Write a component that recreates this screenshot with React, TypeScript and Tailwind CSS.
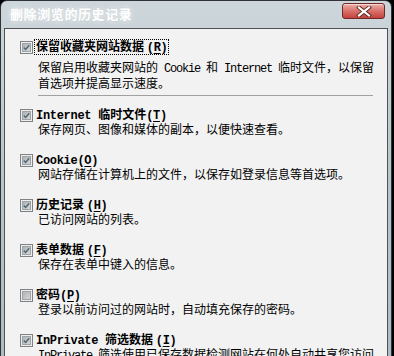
import React from 'react';

const cjk = "font-['Noto_Sans_CJK_SC','Noto_Sans_CJK_JP',sans-serif]";
const mono = "font-['Liberation_Mono','Noto_Sans_CJK_SC',monospace] tracking-[-1.2px]";
const monoBold = "font-['Liberation_Mono','Noto_Sans_CJK_SC',monospace] font-bold tracking-[-0.3px]";

function Check({ checked }: { checked: boolean }) {
  return (
    <div className="w-[13px] h-[13px] shrink-0 border border-[#7e8284] bg-[#eeeeee] p-px">
      <div className="w-full h-full bg-gradient-to-br from-[#aeb3b6] to-[#d4d7d9] border border-[#9ea3a6] flex items-center justify-center">
        {checked && (
          <svg width="9" height="9" viewBox="0 0 9 9">
            <path d="M1 4.6 L3.4 7 L8 1.6" fill="none" stroke="#4e6673" strokeWidth="1.8" />
          </svg>
        )}
      </div>
    </div>
  );
}

function Key({ k }: { k: string }) {
  return (
    <span className={monoBold}>
      (<span className="underline underline-offset-2">{k}</span>)
    </span>
  );
}

interface ItemProps {
  checked: boolean;
  label: React.ReactNode;
  lines: React.ReactNode[];
  focused?: boolean;
  first?: boolean;
}

function Item({ checked, label, lines, focused, first }: ItemProps) {
  return (
    <div>
      <div className="flex items-center h-[14px] pl-[15px]">
        <Check checked={checked} />
        <div
          className={
            focused
              ? 'ml-[1px] px-px border border-dotted border-black leading-[12px] font-bold whitespace-nowrap'
              : 'ml-[3px] leading-[14px] font-bold whitespace-nowrap'
          }
        >
          {label}
        </div>
      </div>
      <div className={first ? 'mt-[6px] pl-[33px] leading-[13px] whitespace-nowrap' : 'pl-[33px] leading-[14px] whitespace-nowrap'}>
        {lines.map((l, i) => (
          <div key={i}>{l}</div>
        ))}
      </div>
    </div>
  );
}

export default function App() {
  return (
    <div className={`w-[394px] h-[356px] bg-black overflow-hidden ${cjk} text-[12px] text-black`}>
      <div className="w-[392px] h-[360px] rounded-t-[7px] border border-[#2f3335] bg-gradient-to-b from-[#cdd6da] via-[#b9c5ca] to-[#aebbc1] flex flex-col">
        {/* Title bar */}
        <div className="h-[27px] flex items-start justify-between shrink-0">
          <div className="pl-[9px] pt-[5px] text-[13px] leading-[16px] text-white font-bold tracking-[0.6px] [text-shadow:0_0_5px_rgba(255,255,255,1),0_0_2px_rgba(150,165,172,0.9)]">
            删除浏览的历史记录
          </div>
          <div className="mt-[2px] mr-[6px] w-[43px] h-[16px] rounded-[3px] border border-[#6d2a26] bg-gradient-to-b from-[#eab0ab] via-[#d8706a] to-[#c4423b] flex items-center justify-center shadow-[inset_0_1px_0_rgba(255,255,255,0.5)]">
            <svg width="16" height="11" viewBox="0 0 16 11">
              <path d="M3 1.5 L13 9.5 M13 1.5 L3 9.5" stroke="#5a2420" strokeWidth="4" strokeLinecap="square" />
              <path d="M3 1.5 L13 9.5 M13 1.5 L3 9.5" stroke="#ffffff" strokeWidth="2.2" strokeLinecap="square" />
            </svg>
          </div>
        </div>

        {/* Client area */}
        <div className="flex-1 mx-[3px] border border-[#4d5356] bg-[#f2f2f2] pt-[11px]">
          <Item
            first
            focused
            checked
            label={
              <span>
                保留收藏夹网站数据 <Key k="R" />
              </span>
            }
            lines={[
              <span>
                保留启用收藏夹网站的<span className={mono}> Cookie </span>和<span className={mono}> Internet </span>临时文件，以保留
              </span>,
              <span>首选项并提高显示速度。</span>,
            ]}
          />
          <div className="mt-[6px] ml-[33px] w-[335px] h-px bg-[#a0a0a0]" />

          <div className="mt-[12px] flex flex-col gap-[17px]">
            <Item
              checked
              label={
                <span>
                  <span className={monoBold}>Internet </span> 临时文件<Key k="T" />
                </span>
              }
              lines={[<span>保存网页、图像和媒体的副本，以便快速查看。</span>]}
            />
            <Item
              checked
              label={
                <span>
                  <span className={monoBold}>Cookie</span>
                  <Key k="O" />
                </span>
              }
              lines={[<span>网站存储在计算机上的文件，以保存如登录信息等首选项。</span>]}
            />
            <Item
              checked
              label={
                <span>
                  历史记录 <Key k="H" />
                </span>
              }
              lines={[<span>已访问网站的列表。</span>]}
            />
            <Item
              checked
              label={
                <span>
                  表单数据 <Key k="F" />
                </span>
              }
              lines={[<span>保存在表单中键入的信息。</span>]}
            />
            <Item
              checked={false}
              label={
                <span>
                  密码<Key k="P" />
                </span>
              }
              lines={[<span>登录以前访问过的网站时，自动填充保存的密码。</span>]}
            />
            <Item
              checked
              label={
                <span>
                  <span className={monoBold}>InPrivate </span> 筛选数据 <Key k="I" />
                </span>
              }
              lines={[
                <span>
                  <span className={mono}>InPrivate </span>筛选使用已保存数据检测网站在何处自动共享您访问
                </span>,
              ]}
            />
          </div>
        </div>
      </div>
    </div>
  );
}
